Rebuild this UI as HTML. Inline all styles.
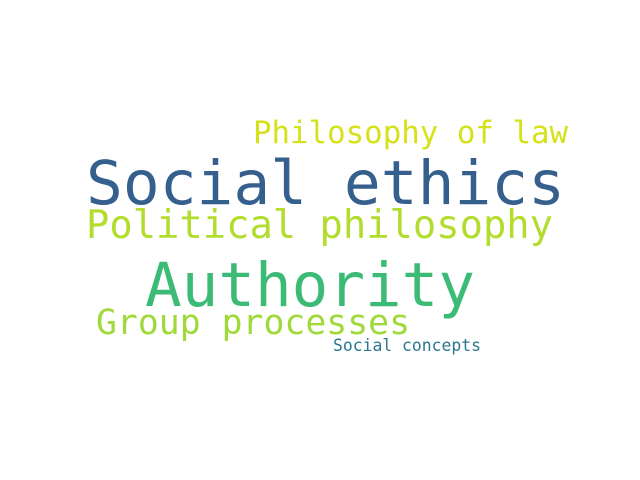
<!DOCTYPE html>
<html><head><meta charset="utf-8"><style>
html,body{margin:0;padding:0;background:#fff;width:640px;height:480px;overflow:hidden}
svg{display:block}
text{font-family:"DejaVu Sans Mono","Liberation Mono",monospace}
</style></head><body>
<svg width="640" height="480" viewBox="0 0 640 480">
<rect width="640" height="480" fill="#fff"/>
<text x="253" y="143" font-size="31" fill="#d5e21a" textLength="315" lengthAdjust="spacingAndGlyphs">Philosophy of law</text>
<text x="86" y="204" font-size="61" fill="#355f8d" textLength="479" lengthAdjust="spacingAndGlyphs">Social ethics</text>
<text x="86" y="238" font-size="39" fill="#b2dd2d" textLength="467" lengthAdjust="spacingAndGlyphs">Political philosophy</text>
<text x="145" y="306" font-size="61" fill="#3bbb75" textLength="330" lengthAdjust="spacingAndGlyphs">Authority</text>
<text x="96" y="334" font-size="35" fill="#9fda3a" textLength="314" lengthAdjust="spacingAndGlyphs">Group processes</text>
<text x="333" y="351" font-size="16.4" fill="#2a788e" textLength="148" lengthAdjust="spacingAndGlyphs">Social concepts</text>
</svg>
</body></html>
